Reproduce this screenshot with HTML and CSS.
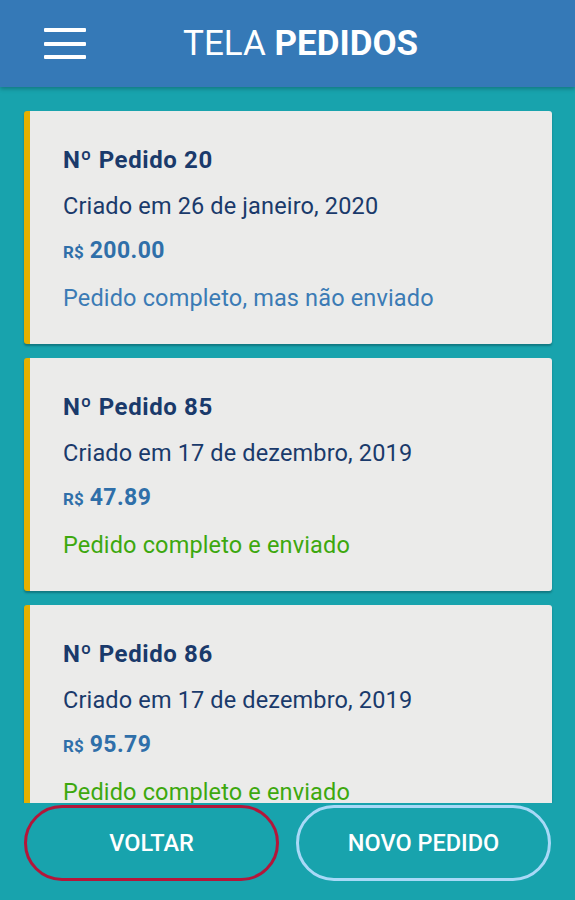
FILE: index.html
```html
<!DOCTYPE html>
<html>

<head>
  <meta charset="utf-8">
  <link rel="stylesheet" href="styles.css">
</head>

<body>

  <header class="topbar">
    <button class="menu-btn" aria-label="menu">
      <span></span><span></span><span></span>
    </button>
    <h1 class="title">TELA <b>PEDIDOS</b></h1>
  </header>

  <main class="order-list">

    <div class="order-card">
      <div class="order-num">Nº Pedido 20</div>
      <div class="order-date">Criado em 26 de janeiro, 2020</div>
      <div class="order-price"><small>R$</small> 200.00</div>
      <div class="order-status pending">Pedido completo, mas não enviado</div>
    </div>

    <div class="order-card">
      <div class="order-num">Nº Pedido 85</div>
      <div class="order-date">Criado em 17 de dezembro, 2019</div>
      <div class="order-price"><small>R$</small> 47.89</div>
      <div class="order-status sent">Pedido completo e enviado</div>
    </div>

    <div class="order-card">
      <div class="order-num">Nº Pedido 86</div>
      <div class="order-date">Criado em 17 de dezembro, 2019</div>
      <div class="order-price"><small>R$</small> 95.79</div>
      <div class="order-status sent">Pedido completo e enviado</div>
    </div>

  </main>

  <footer class="actions">
    <button class="pill pill-back">VOLTAR</button>
    <button class="pill pill-new">NOVO PEDIDO</button>
  </footer>

</body>

</html>
```

FILE: styles.css
```css
:root {
  --header-blue: #3579b7;
  --teal: #18a3ad;
  --card-bg: #ebebea;
  --navy: #1a3a6b;
  --price-blue: #2f6fa9;
  --status-blue: #3b7bb5;
  --status-green: #3da80e;
  --stripe: #e6b000;
}

html,
body {
  margin: 0;
  height: 100%;
}

body {
  display: flex;
  flex-direction: column;
  background-color: var(--teal);
  font-family: Roboto, "Liberation Sans", sans-serif;
  overflow: hidden;
}

/*********** Header ***********/

.topbar {
  flex: 0 0 87px;
  display: flex;
  align-items: center;
  background-color: var(--header-blue);
  box-shadow: 0 2px 4px rgba(0, 0, 0, 0.25);
  position: relative;
  z-index: 1;
}

.menu-btn {
  display: flex;
  flex-direction: column;
  justify-content: space-between;
  width: 42px;
  height: 31px;
  margin-left: 44px;
  padding: 0;
  border: none;
  background: none;
}

.menu-btn span {
  display: block;
  height: 4px;
  border-radius: 1px;
  background-color: #fff;
}

.title {
  margin: 0 0 0 97px;
  font-size: 35px;
  font-weight: 400;
  color: #fff;
}

.title b {
  font-weight: 700;
}

/*********** Orders ***********/

.order-list {
  flex: 1;
  overflow: hidden;
  display: flex;
  flex-direction: column;
  gap: 14px;
  padding: 24px 23px 0 24px;
}

.order-card {
  flex: 0 0 auto;
  display: flex;
  flex-direction: column;
  gap: 17.5px;
  padding: 35px 20px 32.5px 33px;
  background-color: var(--card-bg);
  border-left: 6px solid var(--stripe);
  border-radius: 3px;
  box-shadow: 0 2px 2px rgba(0, 40, 50, 0.35);
}

.order-num {
  font-size: 24px;
  font-weight: 700;
  line-height: 28px;
  letter-spacing: 0.6px;
  color: var(--navy);
}

.order-date {
  font-size: 23.5px;
  line-height: 28px;
  letter-spacing: 0.15px;
  color: var(--navy);
}

.order-price {
  font-size: 23px;
  font-weight: 700;
  line-height: 28px;
  letter-spacing: 0.4px;
  color: var(--price-blue);
}

.order-price small {
  font-size: 17px;
  letter-spacing: 0;
}

.order-status {
  font-size: 23.5px;
  line-height: 28px;
  letter-spacing: 0.15px;
}

.order-status.pending {
  color: var(--status-blue);
}

.order-status.sent {
  color: var(--status-green);
}

/*********** Footer buttons ***********/

.actions {
  flex: 0 0 97px;
  display: flex;
  gap: 17px;
  padding: 2px 24px 0 24px;
  box-sizing: border-box;
}

.pill {
  flex: 1;
  height: 76px;
  border-radius: 38px;
  background: transparent;
  font-family: Roboto, "Liberation Sans", sans-serif;
  font-size: 23.5px;
  font-weight: 500;
  color: #fff;
}

.pill-back {
  border: 3px solid #b3163a;
}

.pill-new {
  border: 3px solid #a8d9f7;
}
```
